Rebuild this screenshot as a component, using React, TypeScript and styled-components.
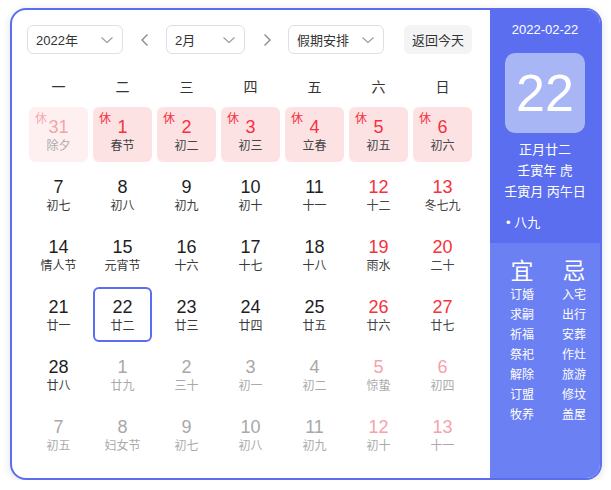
import React from 'react';
import styled, { createGlobalStyle } from 'styled-components';

const GlobalStyle = createGlobalStyle`
  body {
    margin: 0;
    background: #ffffff;
    font-family: 'Liberation Sans', 'Noto Sans CJK SC', sans-serif;
  }
`;

const Card = styled.div`
  box-sizing: border-box;
  display: flex;
  width: 592px;
  height: 472px;
  margin: 8px 0 0 10px;
  border: 2px solid #5b6ef0;
  border-radius: 16px;
  overflow: hidden;
  box-shadow: 0 2px 8px rgba(0, 0, 0, 0.12);
  background: #fff;
`;

const Main = styled.div`
  width: 478px;
  padding: 15px 0 0 15px;
  box-sizing: border-box;
`;

const Toolbar = styled.div`
  display: flex;
  align-items: center;
  height: 29px;
`;

const Select = styled.div<{ $width: number }>`
  box-sizing: border-box;
  display: flex;
  align-items: center;
  justify-content: space-between;
  width: ${({ $width }) => $width}px;
  height: 29px;
  padding: 0 8px 0 8px;
  border: 1px solid #dcdfe6;
  border-radius: 6px;
  font-size: 13px;
  color: #333;
`;

const ArrowButton = styled.div`
  display: flex;
  align-items: center;
  justify-content: center;
  width: 43px;
  height: 29px;
  color: #888;
`;

const TodayButton = styled.div`
  display: flex;
  align-items: center;
  justify-content: center;
  width: 68px;
  height: 29px;
  margin-left: 20px;
  border-radius: 6px;
  background: #f4f4f5;
  font-size: 13px;
  color: #333;
`;

const Grid = styled.div`
  display: grid;
  grid-template-columns: repeat(7, 59px);
  gap: 5px;
  padding-left: 2px;
`;

const WeekRow = styled(Grid)`
  margin-top: 18px;
  margin-bottom: 5px;
`;

const WeekDay = styled.div`
  height: 30px;
  line-height: 30px;
  text-align: center;
  font-size: 14px;
  color: #333;
`;

type Tone = 'normal' | 'red' | 'muted' | 'mutedRed';

const numColor: Record<Tone, string> = {
  normal: '#1f1f1f',
  red: '#f5313d',
  muted: '#a8a8a8',
  mutedRed: '#f5a3aa',
};

const lunarColor: Record<Tone, string> = {
  normal: '#3a3a3a',
  red: '#444',
  muted: '#aaaaaa',
  mutedRed: '#aaaaaa',
};

const Cell = styled.div<{ $rest?: 'on' | 'faded'; $selected?: boolean }>`
  position: relative;
  box-sizing: border-box;
  height: 55px;
  padding-top: 9px;
  text-align: center;
  border-radius: 6px;
  border: 2px solid ${({ $selected }) => ($selected ? '#5b6ef0' : 'transparent')};
  background: ${({ $rest }) =>
    $rest === 'on' ? '#fde2e4' : $rest === 'faded' ? '#fef0f1' : 'transparent'};
`;

const DayNum = styled.div<{ $tone: Tone }>`
  margin-top: -2px;
  font-size: 18px;
  line-height: 22px;
  color: ${({ $tone }) => numColor[$tone]};
`;

const Lunar = styled.div<{ $tone: Tone }>`
  font-size: 12px;
  line-height: 16px;
  color: ${({ $tone }) => lunarColor[$tone]};
`;

const RestBadge = styled.span<{ $faded?: boolean }>`
  position: absolute;
  top: 3px;
  left: 4px;
  font-size: 12px;
  line-height: 14px;
  color: ${({ $faded }) => ($faded ? '#f7a9af' : '#f5313d')};
`;

const Side = styled.div`
  display: flex;
  flex-direction: column;
  width: 110px;
  color: #fff;
`;

const SideTop = styled.div`
  height: 233px;
  padding-top: 12px;
  box-sizing: border-box;
  background: #5b6ef0;
  text-align: center;
`;

const SideDate = styled.div`
  font-size: 13px;
  line-height: 16px;
`;

const BigDay = styled.div`
  width: 80px;
  height: 80px;
  margin: 15px auto 6px;
  border-radius: 10px;
  background: #a9b6f6;
  font-size: 52px;
  line-height: 80px;
  font-weight: 300;
`;

const InfoLine = styled.div`
  font-size: 13px;
  line-height: 21px;
`;

const Term = styled.div`
  margin-top: 11px;
  padding-left: 16px;
  text-align: left;
  font-size: 13px;
  line-height: 20px;
`;

const SideBottom = styled.div`
  flex: 1;
  display: grid;
  grid-template-columns: 52px 52px;
  padding: 14px 4px 0 6px;
  background: #6b80f2;
  align-content: start;
`;

const Column = styled.div`
  text-align: center;
`;

const ColumnTitle = styled.div`
  font-size: 23px;
  line-height: 28px;
`;

const Item = styled.div`
  font-size: 12px;
  line-height: 20px;
`;

const Chevron = () => (
  <svg width="14" height="14" viewBox="0 0 14 14" fill="none">
    <path d="M1.5 4.5 L7 9.5 L12.5 4.5" stroke="#9a9a9a" strokeWidth="1.1" />
  </svg>
);

const Arrow = ({ dir }: { dir: 'left' | 'right' }) => (
  <svg width="16" height="16" viewBox="0 0 16 16" fill="none">
    <path
      d={dir === 'left' ? 'M10.5 2.5 L5 8 L10.5 13.5' : 'M5.5 2.5 L11 8 L5.5 13.5'}
      stroke="#8a8a8a"
      strokeWidth="1.4"
    />
  </svg>
);

type Day = { n: number; l: string; tone?: Tone; rest?: 'on' | 'faded'; sel?: boolean };

const days: Day[] = [
  { n: 31, l: '除夕', tone: 'mutedRed', rest: 'faded' },
  { n: 1, l: '春节', tone: 'red', rest: 'on' },
  { n: 2, l: '初二', tone: 'red', rest: 'on' },
  { n: 3, l: '初三', tone: 'red', rest: 'on' },
  { n: 4, l: '立春', tone: 'red', rest: 'on' },
  { n: 5, l: '初五', tone: 'red', rest: 'on' },
  { n: 6, l: '初六', tone: 'red', rest: 'on' },
  { n: 7, l: '初七' },
  { n: 8, l: '初八' },
  { n: 9, l: '初九' },
  { n: 10, l: '初十' },
  { n: 11, l: '十一' },
  { n: 12, l: '十二', tone: 'red' },
  { n: 13, l: '冬七九', tone: 'red' },
  { n: 14, l: '情人节' },
  { n: 15, l: '元宵节' },
  { n: 16, l: '十六' },
  { n: 17, l: '十七' },
  { n: 18, l: '十八' },
  { n: 19, l: '雨水', tone: 'red' },
  { n: 20, l: '二十', tone: 'red' },
  { n: 21, l: '廿一' },
  { n: 22, l: '廿二', sel: true },
  { n: 23, l: '廿三' },
  { n: 24, l: '廿四' },
  { n: 25, l: '廿五' },
  { n: 26, l: '廿六', tone: 'red' },
  { n: 27, l: '廿七', tone: 'red' },
  { n: 28, l: '廿八' },
  { n: 1, l: '廿九', tone: 'muted' },
  { n: 2, l: '三十', tone: 'muted' },
  { n: 3, l: '初一', tone: 'muted' },
  { n: 4, l: '初二', tone: 'muted' },
  { n: 5, l: '惊蛰', tone: 'mutedRed' },
  { n: 6, l: '初四', tone: 'mutedRed' },
  { n: 7, l: '初五', tone: 'muted' },
  { n: 8, l: '妇女节', tone: 'muted' },
  { n: 9, l: '初七', tone: 'muted' },
  { n: 10, l: '初八', tone: 'muted' },
  { n: 11, l: '初九', tone: 'muted' },
  { n: 12, l: '初十', tone: 'mutedRed' },
  { n: 13, l: '十一', tone: 'mutedRed' },
];

const weekDays = ['一', '二', '三', '四', '五', '六', '日'];
const good = ['订婚', '求嗣', '祈福', '祭祀', '解除', '订盟', '牧养'];
const bad = ['入宅', '出行', '安葬', '作灶', '旅游', '修坟', '盖屋'];

export default function App() {
  return (
    <>
      <GlobalStyle />
      <Card>
        <Main>
          <Toolbar>
            <Select $width={96}>
              2022年
              <Chevron />
            </Select>
            <ArrowButton>
              <Arrow dir="left" />
            </ArrowButton>
            <Select $width={79}>
              2月
              <Chevron />
            </Select>
            <ArrowButton>
              <Arrow dir="right" />
            </ArrowButton>
            <Select $width={96}>
              假期安排
              <Chevron />
            </Select>
            <TodayButton>返回今天</TodayButton>
          </Toolbar>
          <WeekRow>
            {weekDays.map((w) => (
              <WeekDay key={w}>{w}</WeekDay>
            ))}
          </WeekRow>
          <Grid>
            {days.map((d, i) => {
              const tone = d.tone ?? 'normal';
              const lunarTone: Tone = d.rest === 'faded' ? 'muted' : tone;
              return (
                <Cell key={i} $rest={d.rest} $selected={d.sel}>
                  {d.rest && <RestBadge $faded={d.rest === 'faded'}>休</RestBadge>}
                  <DayNum $tone={tone}>{d.n}</DayNum>
                  <Lunar $tone={lunarTone}>{d.l}</Lunar>
                </Cell>
              );
            })}
          </Grid>
        </Main>
        <Side>
          <SideTop>
            <SideDate>2022-02-22</SideDate>
            <BigDay>22</BigDay>
            <InfoLine>正月廿二</InfoLine>
            <InfoLine>壬寅年 虎</InfoLine>
            <InfoLine>壬寅月 丙午日</InfoLine>
            <Term>• 八九</Term>
          </SideTop>
          <SideBottom>
            <Column>
              <ColumnTitle>宜</ColumnTitle>
              {good.map((g) => (
                <Item key={g}>{g}</Item>
              ))}
            </Column>
            <Column>
              <ColumnTitle>忌</ColumnTitle>
              {bad.map((b) => (
                <Item key={b}>{b}</Item>
              ))}
            </Column>
          </SideBottom>
        </Side>
      </Card>
    </>
  );
}
